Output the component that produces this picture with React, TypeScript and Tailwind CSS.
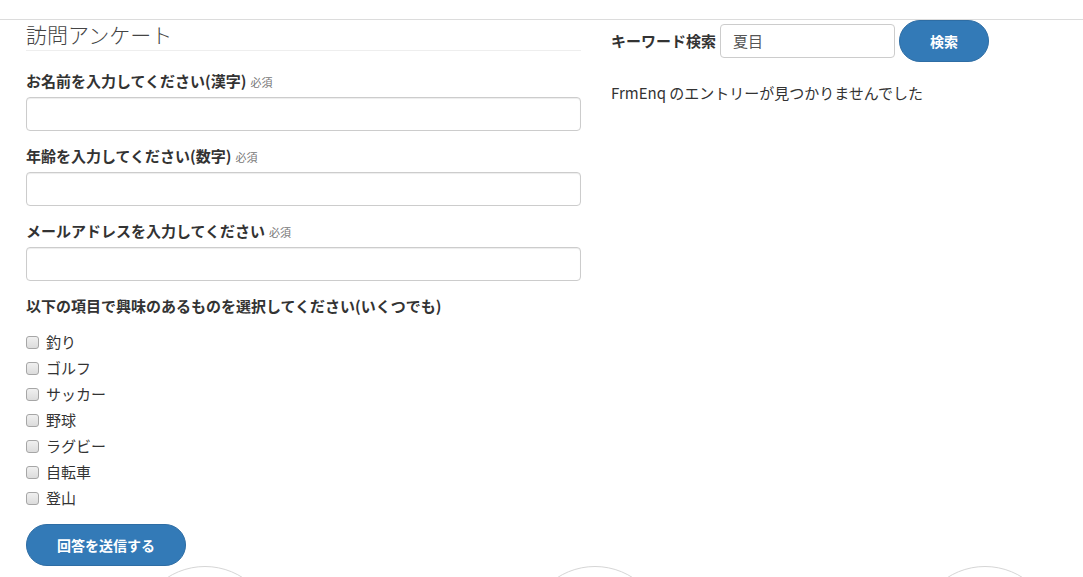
import React from "react";

const font = { fontFamily: '"Noto Sans CJK JP", "Noto Sans", sans-serif' };

function Label({ text, required = true }: { text: string; required?: boolean }) {
  return (
    <div className="flex items-baseline h-[20px] leading-[20px] mb-[6px]">
      <span className="text-[15px] font-bold text-[#333]">{text}</span>
      {required && <span className="ml-[4px] text-[11px] text-[#777]">必須</span>}
    </div>
  );
}

function Field({ text }: { text: string }) {
  return (
    <div className="mb-[15px]">
      <Label text={text} />
      <div className="h-[34px] w-full rounded-[4px] border border-[#ccc] bg-white shadow-[inset_0_1px_1px_rgba(0,0,0,0.075)]" />
    </div>
  );
}

function Check({ text }: { text: string }) {
  return (
    <div className="flex items-center h-[26px]">
      <span className="w-[13px] h-[13px] rounded-[3px] border border-[#a6a6a6] bg-gradient-to-b from-[#f0f0f0] to-[#dcdcdc]" />
      <span className="ml-[7px] text-[15px] text-[#333] leading-[20px]">{text}</span>
    </div>
  );
}

export default function App() {
  const items = ["釣り", "ゴルフ", "サッカー", "野球", "ラグビー", "自転車", "登山"];
  return (
    <div className="h-[577px] w-[1083px] overflow-hidden bg-white" style={font}>
      <div className="h-[20px] border-b border-[#dcdcdc]" />
      <div className="flex pl-[26px]">
        <div className="w-[555px] shrink-0">
          <div className="h-[31px] border-b border-[#eee] text-[21px] leading-[28px] text-[#444] font-light">
            訪問アンケート
          </div>
          <div className="mt-[20px]">
            <Field text="お名前を入力してください(漢字)" />
            <Field text="年齢を入力してください(数字)" />
            <Field text="メールアドレスを入力してください" />
            <div className="h-[20px] leading-[20px] text-[15px] font-bold text-[#333]">
              以下の項目で興味のあるものを選択してください(いくつでも)
            </div>
            <div className="mt-[13px]">
              {items.map((t) => (
                <Check key={t} text={t} />
              ))}
            </div>
            <button className="mt-[13px] h-[42px] w-[160px] rounded-full bg-[#337ab7] text-white text-[14px] font-bold flex items-center justify-center border border-[#2e6da4]">
              回答を送信する
            </button>
          </div>
        </div>
        <div className="ml-[30px]">
          <div className="flex items-center h-[42px]">
            <span className="text-[15px] font-bold text-[#333]">キーワード検索</span>
            <div className="ml-[4px] h-[34px] w-[175px] rounded-[4px] border border-[#ccc] flex items-center pl-[12px] text-[15px] text-[#555]">
              夏目
            </div>
            <button className="ml-[4px] h-[42px] w-[90px] rounded-full bg-[#337ab7] text-white text-[14px] font-bold flex items-center justify-center border border-[#2e6da4]">
              検索
            </button>
          </div>
          <div className="mt-[21px] text-[15px] leading-[20px] text-[#333]">
            FrmEnq のエントリーが見つかりませんでした
          </div>
        </div>
      </div>
      <div className="flex pl-[10px]">
        {[0, 1, 2].map((i) => (
          <div key={i} className="w-[390px] shrink-0 flex justify-center">
            <div className="w-[140px] h-[140px] shrink-0 rounded-full border border-[#d6d6d6]" />
          </div>
        ))}
      </div>
    </div>
  );
}
